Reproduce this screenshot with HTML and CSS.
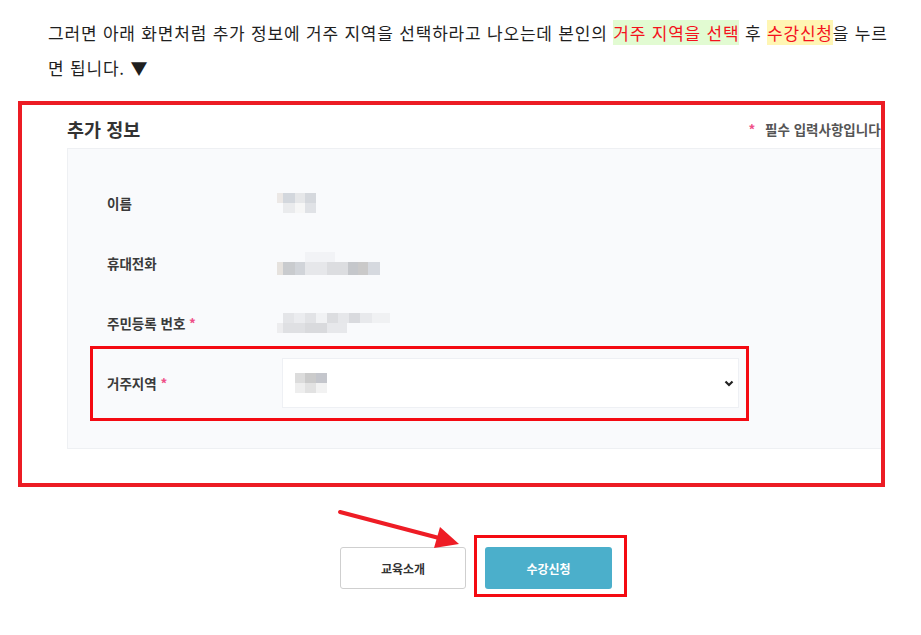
FILE: index.html
```html
<!DOCTYPE html>
<html lang="ko">
<head>
    <meta charset="UTF-8">
    <meta name="viewport" content="width=device-width, initial-scale=1.0">
    <title>수강신청 안내</title>
    <link rel="stylesheet" href="styles.css">
</head>
<body>

    <div class="post">
        <p class="desc">그러면 아래 화면처럼 추가 정보에 거주 지역을 선택하라고 나오는데 본인의 <span class="mark-green">거주 지역을 선택</span> 후 <span class="mark-yellow">수강신청</span>을 누르면 됩니다. ▼</p>

        <div class="capture">
          <div class="capture-inner">
            <div class="capture-head">
              <h3>추가 정보</h3>
              <span class="note"><em>*</em> 필수 입력사항입니다.</span>
            </div>

            <div class="form-panel">
              <div class="row">
                <span class="label">이름</span>
                <div class="mosaic">
                  <div class="m-name-1"></div>
                  <div class="m-name-2"></div>
                </div>
              </div>
              <div class="row">
                <span class="label">휴대전화</span>
                <div class="mosaic">
                  <div class="m-phone-1"></div>
                  <div class="m-phone-2"></div>
                </div>
              </div>
              <div class="row">
                <span class="label">주민등록 번호 <em>*</em></span>
                <div class="mosaic">
                  <div class="m-id-1"></div>
                  <div class="m-id-2"></div>
                </div>
              </div>
              <div class="row marked">
                <span class="label">거주지역 <em>*</em></span>
                <div class="select-box">
                  <div class="mosaic">
                    <div class="m-area-1"></div>
                    <div class="m-area-2"></div>
                  </div>
                  <svg class="chevron" width="10" height="7" viewBox="0 0 10 7">
                    <polyline points="1.5,1.5 5,5 8.5,1.5" fill="none" stroke="#222" stroke-width="2.2"/>
                  </svg>
                </div>
              </div>
            </div>
          </div>
        </div>

        <div class="actions">
          <svg class="pointer" width="140" height="48" viewBox="0 0 140 48">
            <line x1="5" y1="7" x2="104" y2="33" stroke="#ee1c25" stroke-width="4" stroke-linecap="round"/>
            <polygon points="124,39 99,43 105,22" fill="#ee1c25"/>
          </svg>
          <button class="btn btn-line">교육소개</button>
          <div class="btn-mark">
            <button class="btn btn-fill">수강신청</button>
          </div>
        </div>
    </div>

</body>
</html>
```

FILE: styles.css
```css
* {
  margin: 0;
  padding: 0;
  box-sizing: border-box;
}
body {
    font-family: "Noto Sans CJK KR", "Noto Sans", sans-serif;
    background-color: #fff;
    color: #222;
}
.post {
    padding: 15px 18px 0 18px;
}
.desc {
    margin-left: 30px;
    width: 848px;
    font-size: 17px;
    letter-spacing: 0.8px;
    line-height: 35px;
    color: #1f1f1f;
}
.mark-green {
    background: #e2fbd2;
    color: #f4121d;
}
.mark-yellow {
    background: #fff6b4;
    color: #f4121d;
}

/* captured form */
.capture {
    margin-top: 16px;
    width: 867px;
    height: 386px;
    border: 4px solid #ec1c24;
    overflow: hidden;
}
.capture-inner {
    width: 818px;
    margin-left: 45px;
}
.capture-head {
    display: flex;
    align-items: center;
    justify-content: space-between;
    padding: 12px 0 7px 0;
    height: 43px;
}
h3 {
    font-size: 18.5px;
    font-weight: bold;
    color: #333;
}
.note {
    font-size: 13.5px;
    color: #555;
    font-weight: bold;
}
.note em {
    font-style: normal;
    color: #ef4f88;
    margin-right: 6px;
}
.form-panel {
    background: #f9fafc;
    border: 1px solid #eef0f3;
    height: 301px;
    padding: 24px 0 0 0;
}
.row {
    display: flex;
    align-items: center;
    height: 60px;
    padding-left: 39px;
    position: relative;
}
.label {
    width: 175px;
    font-size: 13.5px;
    font-weight: bold;
    color: #3a3a3a;
}
.label em {
    font-style: normal;
    color: #ef4f88;
}
.marked::after {
    content: "";
    position: absolute;
    box-sizing: border-box;
    left: 22px;
    top: -7px;
    width: 659px;
    height: 75px;
    border: 3px solid #f40a12;
}

/* blurred values */
.row > .mosaic {
    margin-left: -5px;
}
.mosaic div {
    height: 10px;
}
.m-name-1 {
    width: 39px;
    background: linear-gradient(to right, #ece8e6 0 6px, #d3d7dd 6px 18px, #e6e7e9 18px 28px, #d5d8dd 28px 39px);
}
.m-name-2 {
    width: 39px;
    background: linear-gradient(to right, transparent 0 6px, #eaebed 6px 18px, #f6f6f6 18px 28px, #e0e2e6 28px 39px);
}
.m-phone-1 {
    width: 103px;
    background: linear-gradient(to right, transparent 0 28px, #f2f3f6 28px 58px, transparent 58px);
}
.m-phone-2 {
    width: 103px;
    height: 13px !important;
    background: linear-gradient(to right, #e6e2de 0 6px, #c9cbce 6px 18px, #d1d4d9 18px 28px, #e6e7ea 28px 50px, #dcdde0 50px 71px, #c5c7cb 71px 81px, #cac9c9 81px 91px, #d6d9df 91px 103px);
}
.m-id-1 {
    width: 113px;
    background: linear-gradient(to right, transparent 0 6px, #e4e5e8 6px 17px, #ebecef 17px 28px, #e2e3e6 28px 39px, #f1f2f4 39px 50px, #dcdde0 50px 61px, #e6e7ea 61px 72px, #d9dade 72px 83px, #e8e9ec 83px 95px, #f0f1f3 95px 113px);
}
.m-id-2 {
    width: 70px;
    background: linear-gradient(to right, #ededef 0 6px, #dfe0e3 6px 28px, #d9dadd 28px 50px, #e7e8eb 50px 70px);
}
.select-box {
    width: 457px;
    height: 50px;
    background: #fff;
    border: 1px solid #eef0f4;
    display: flex;
    align-items: center;
    justify-content: space-between;
    padding: 0 4px 0 12px;
}
.m-area-1 {
    width: 32px;
    background: linear-gradient(to right, #dcdcdc 0 10px, #cbcbcb 10px 21px, #c4c6cc 21px 32px);
}
.m-area-2 {
    width: 32px;
    background: linear-gradient(to right, #eeeeee 0 10px, #e2e2e2 10px 21px, #f2f2f2 21px 32px);
}

/* buttons */
.actions {
    position: relative;
    display: flex;
    align-items: flex-start;
    margin-top: 48px;
    padding-left: 322px;
}
.pointer {
    position: absolute;
    left: 317px;
    top: -30px;
}
.btn {
    font-family: "Noto Sans CJK KR", sans-serif;
    font-size: 12px;
    font-weight: bold;
    width: 126px;
    height: 42px;
    border-radius: 3px;
    cursor: pointer;
}
.btn-line {
    margin-top: 12px;
    margin-right: 8px;
    background: #fff;
    border: 1px solid #cfcfcf;
    color: #333;
}
.btn-mark {
    border: 3px solid #f40a12;
    padding: 9px 12px 5px 8px;
}
.btn-fill {
    width: 127px;
    background: #4bafcb;
    border: none;
    color: #fff;
}
```
